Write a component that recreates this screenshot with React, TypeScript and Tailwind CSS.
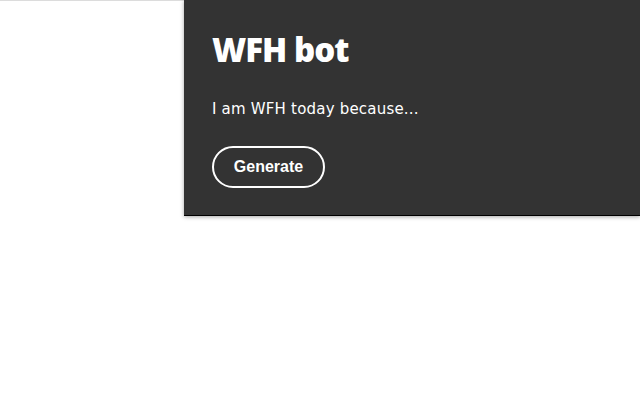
export default function App() {
  return (
    <div className="min-h-screen w-full bg-white border-t border-[#dcdcdc] flex justify-end">
      <div className="w-[456px] h-[216px] -mt-px bg-[#333333] border-b border-black shadow-[0_1px_4px_rgba(0,0,0,0.35)] px-[28px] pt-[28px] flex flex-col items-start font-['Open_Sans','Noto_Sans',sans-serif]">
        <h1 className="text-[33px] leading-[44px] font-extrabold text-white tracking-[-1px]">WFH bot</h1>
        <p className="mt-[27px] text-[15px] leading-[20px] text-white tracking-[0.2px] font-['DejaVu_Sans',sans-serif]">
          I am WFH today because...
        </p>
        <button className="mt-[27px] h-[42px] w-[113px] rounded-full border-2 border-white text-white text-[16px] font-bold font-['Liberation_Sans',Arial,sans-serif]">
          Generate
        </button>
      </div>
    </div>
  );
}
